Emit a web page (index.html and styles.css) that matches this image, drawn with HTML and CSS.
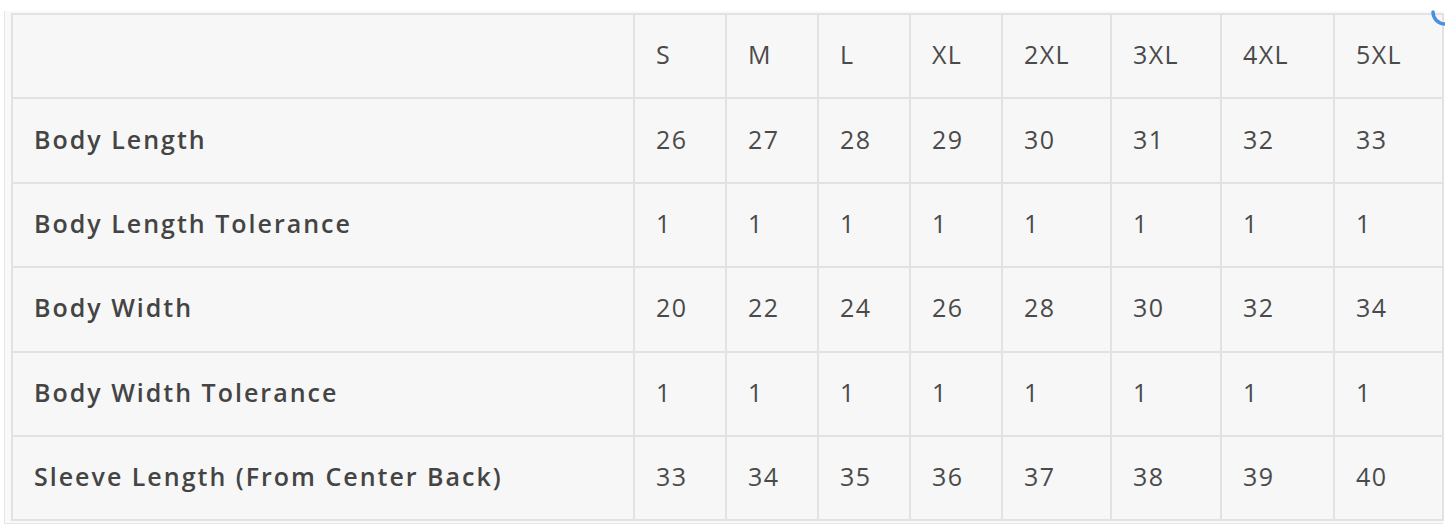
FILE: index.html
```html
<!DOCTYPE html>
<html>
<head>
<meta charset="utf-8">
<link rel="stylesheet" href="styles.css">
</head>
<body>
<div class="wrap">
  <table class="size-table">
    <colgroup>
      <col class="c-label">
      <col class="c92"><col class="c92"><col class="c92"><col class="c92">
      <col class="c109"><col class="c110"><col class="c113"><col class="c109">
    </colgroup>
    <tr><td></td><td>S</td><td>M</td><td>L</td><td>XL</td><td>2XL</td><td>3XL</td><td>4XL</td><td>5XL</td></tr>
    <tr><th>Body Length</th><td>26</td><td>27</td><td>28</td><td>29</td><td>30</td><td>31</td><td>32</td><td>33</td></tr>
    <tr><th>Body Length Tolerance</th><td>1</td><td>1</td><td>1</td><td>1</td><td>1</td><td>1</td><td>1</td><td>1</td></tr>
    <tr><th>Body Width</th><td>20</td><td>22</td><td>24</td><td>26</td><td>28</td><td>30</td><td>32</td><td>34</td></tr>
    <tr><th>Body Width Tolerance</th><td>1</td><td>1</td><td>1</td><td>1</td><td>1</td><td>1</td><td>1</td><td>1</td></tr>
    <tr><th>Sleeve Length (From Center Back)</th><td>33</td><td>34</td><td>35</td><td>36</td><td>37</td><td>38</td><td>39</td><td>40</td></tr>
  </table>
</div>
<svg class="spinner" width="20" height="30" viewBox="0 0 20 30">
  <path d="M4 12 A12 12 0 0 0 16 24" fill="none" stroke="#4a90e2" stroke-width="3.5" stroke-linecap="round"/>
</svg>
</body>
</html>
```
FILE: styles.css
```css
html, body {
  margin: 0;
  padding: 0;
  background: #ffffff;
  overflow: hidden;
}
body {
  width: 1445px;
  height: 525px;
  position: relative;
  font-family: "Open Sans", "Noto Sans", sans-serif;
  color: #454545;
}
.wrap {
  margin: 11px 0 0 4px;
  padding: 2px 0 2px 6px;
  border-left: 1px solid #e6e6e6;
  border-bottom: 1px solid #e6e6e6;
  background: #f9f9f9;
  width: 1432px;
}
.size-table {
  border-collapse: collapse;
  table-layout: fixed;
  width: 1433px;
  background: #f7f7f7;
}
.c-label { width: 622px; }
.c92 { width: 92px; }
.c109 { width: 109px; }
.c110 { width: 110px; }
.c113 { width: 113px; }
.size-table tr {
  height: 84.4px;
}
.size-table td, .size-table th {
  border: 2px solid #e2e2e2;
  padding: 0 0 4px 21px;
  text-align: left;
  vertical-align: middle;
  font-size: 25px;
  line-height: 30px;
}
.size-table td {
  font-weight: 400;
  color: #4a4a4a;
  letter-spacing: 1.4px;
}
.size-table th {
  font-weight: 600;
  color: #444444;
  letter-spacing: 2px;
}
.spinner {
  position: absolute;
  left: 1429px;
  top: 0;
}
```
